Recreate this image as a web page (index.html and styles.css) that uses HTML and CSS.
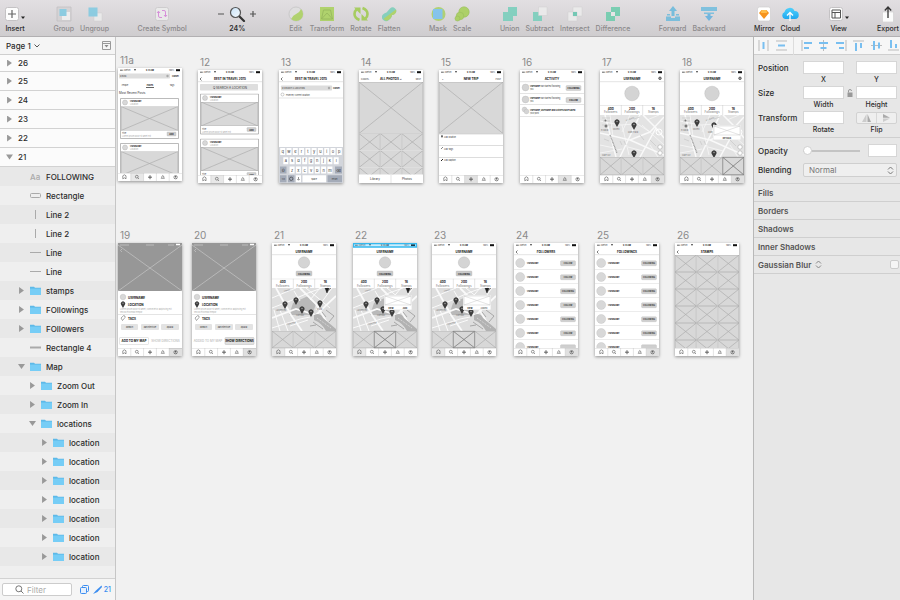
FILE: index.html
```html
<!DOCTYPE html>
<html lang="en">
<head>
<meta charset="utf-8">
<title>Wireframes</title>
<link rel="stylesheet" href="styles.css">
</head>
<body>
<svg class="defs" aria-hidden="true">
  <defs>
    <linearGradient id="lens" x1="0" y1="0" x2="1" y2="1"><stop offset="0" stop-color="#c9e2f7"/><stop offset="1" stop-color="#f4fafe"/></linearGradient>
    <linearGradient id="sky" x1="0" y1="0" x2="0" y2="1"><stop offset="0" stop-color="#4fd0fb"/><stop offset="1" stop-color="#1fa8f0"/></linearGradient>
  </defs>
  <symbol id="folder" viewBox="0 0 11 9"><path d="M0 .8h4l1 1h6V9H0z" fill="#5db9e8"/><path d="M0 2.6h11V9H0z" fill="#76cdf6"/></symbol>
  <symbol id="box" viewBox="0 0 10 10" preserveAspectRatio="none"><path class="hair" d="M0 0h10v10H0zM0 0l10 10M10 0L0 10"/></symbol>
  <symbol id="status" viewBox="0 0 64 4">
    <path d="M2 2.2h.8M3.2 2.2H4M4.4 2.2h.8" stroke="#222" stroke-width=".9"/><text x="6" y="3">Sketch</text>
    <path d="M16 1.4q1-.8 2 0l-1 1.4z" fill="#222"/>
    <text class="b" x="32" y="3" text-anchor="middle">9:41 AM</text><text x="51" y="3">100%</text>
    <path d="M58 1.2h4v2h-4z" fill="#111"/>
  </symbol>
  <symbol id="glyphs" viewBox="0 0 64 8">
    <path class="line" d="M0 .3h64M12.8 0v8M25.6 0v8M38.4 0v8M51.2 0v8"/>
    <g fill="none" stroke="#555" stroke-width=".6"><path d="M4.8 5.8v-3l1.6-1 1.6 1v3l-1.6-1z"/><circle cx="18.8" cy="3.7" r="1.4"/><path d="M19.8 4.8l1.2 1.2"/><path d="M32 2.2v4M30 4.2h4" stroke-width=".9"/><path d="M43.200 5.300h3.200q-.8-.8-.8-2.200-.8-1.200-1.600 0 0 1.400-.8 2.200z"/><circle cx="57.600" cy="4.200" r="1.700"/><path d="M56.600 5.400q1-1.400 2 0"/></g><circle cx="57.600" cy="3.600" r=".7" fill="#555"/>
  </symbol>
  <symbol id="pin" viewBox="0 0 6 8"><path d="M3 8L.9 4.300A2.500 2.500 0 1 1 5.100 4.300z" fill="#3d3d3d"/><circle cx="3" cy="2.500" r=".8" fill="#999"/></symbol>
  <symbol id="card" viewBox="0 0 60 42">
    <path d="M.5.5h58v40H.5z" fill="#fff" stroke="#aaa" stroke-width=".8"/><circle cx="5" cy="4.500" r="2.500" fill="#d8d8d8" stroke="#999" stroke-width=".3"/>
    <text class="b" x="10" y="4">USERNAME</text><text class="pale" x="10" y="7">Location</text>
    <use href="#box" x="1" y="8.500" width="57" height="24"/><text x="2" y="36">Title</text>
    <text class="pale" x="2" y="39">Lorem ipsum dolor sit amet elit</text>
    <rect x="47" y="34" width="9" height="4" rx=".7" fill="#cfcfcf" stroke="#aaa" stroke-width=".3"/><text class="b" x="51.500" y="37" text-anchor="middle">ADD</text>
  </symbol>
  <symbol id="stats" viewBox="0 0 64 10">
    <path class="line" d="M0 .3h64M21.300 0v10M42.700 0v10"/>
    <g text-anchor="middle"><text class="b m" x="10.700" y="4.800">400</text><text class="b m" x="32" y="4.800">200</text><text class="b m" x="53.300" y="4.800">16</text>
    <text class="gray m" x="10.700" y="8">Followers</text><text class="gray m" x="32" y="8">Followings</text><text class="gray m" x="53.300" y="8">Stamps</text></g>
  </symbol>
  <symbol id="map-a" viewBox="0 0 64 42">
    <path d="M0 0h64v42H0z" fill="#e3e3e3"/>
    <g fill="none" stroke="#f9f9f9"><path stroke-width="1.500" d="M5 0l11 42M20 42L40 0M0 18l30 7 20-8L64 2M43 0l13 13 8 10M30 25l34 15M56 13L40 42"/><path stroke-width=".7" d="M0 6l20 4 16-1M0 30l14 3M22 10l7 30M42 10l22 20M50 30l8 12M10 0l3 22M30 0l-8 17M0 38l22-4M36 8l14 9M47 5l12-5M28 32l15 4"/></g>
    <g stroke="#c7c7c7" fill="none" stroke-width=".7"><path d="M2 3h8M3 6h7M2 10h9M20 26l2 4M24 26l2 4M40 20l4 5M34 4l6-2M4 24l5 2M50 25l6 6"/></g>
    <path d="M10 20l7 18" stroke="#999" stroke-width="1.200" stroke-dasharray="1 .5"/><circle cx="59" cy="17" r="3" fill="none" stroke="#fff"/>
    <g fill="#777"><circle cx="5.500" cy="5.500" r="1"/><circle cx="6" cy="11" r="1.500"/></g>
    <text class="gray" x="1" y="16">El Raval</text><text class="gray" x="28" y="18">Gran Plaza</text><text class="gray" x="13" y="15">Museo</text><text class="gray" x="2" y="41">Calle Sur</text><text class="gray" x="26" y="6" transform="rotate(-18 26 6)">Av. Norte</text>
    <circle cx="60" cy="32" r="2.200" fill="#fff" stroke="#888" stroke-width=".4"/><circle cx="60" cy="38" r="2.200" fill="#fff" stroke="#888" stroke-width=".4"/>
    <use href="#pin" x="14" y="4" width="6" height="8"/><use href="#pin" x="31" y="7" width="6" height="8"/><use href="#pin" x="31" y="35" width="6" height="8"/>
  </symbol>
  <symbol id="map-b" viewBox="0 0 64 43">
    <path d="M0 0h64v43H0z" fill="#dedede"/><path d="M17 27l4-12 15-7 8 8-4 11z" fill="#b9b9b9"/>
    <g fill="none" stroke="#fafafa"><path stroke-width="1.800" d="M0 30l24-9 20 6L64 8M4 0l15 27L30 43M28 0l16 16 16 27"/><path stroke-width="1" d="M0 10l14-6 10-4M0 20l18-7 18-8L50 0M8 43L2 22M0 40l28-9 10-2M16 43L8 22M34 0l24 20M48 0L38 12M22 3l6 10M60 0L44 22M18 38l18-6"/></g>
    <path d="M42 27q6-3 9 3l13 11v2H54q-4-8-12-11z" fill="#b2b2b2"/><path d="M54 22l8 6-5 6M50 24l4 5M41 34l10 7M38 38l6-1" fill="none" stroke="#999" stroke-width=".8"/>
    <path d="M45 30l14 10" stroke="#eee" stroke-width=".7" stroke-dasharray="1 1"/>
    <text class="gray" x="4" y="23">La Merced</text><text class="gray" x="24" y="28">Catedral</text><text class="gray" x="15" y="37" transform="rotate(-14 15 37)">Calle Real</text><text class="gray" x="12" y="4" transform="rotate(-15 12 4)">Centro</text><text class="gray" x="45" y="22">Plaza</text>
    <use href="#pin" x="10" y="13" width="6" height="8"/><use href="#pin" x="21" y="9" width="6" height="8"/><use href="#pin" x="27" y="18" width="6" height="8"/><use href="#pin" x="36" y="21" width="6" height="8"/><use href="#pin" x="45" y="12" width="6" height="8"/><path d="M53 0h4l-2 5zM54 4l5-4" fill="#222" stroke="#222" stroke-width=".5"/>
  </symbol>
  <symbol id="photo-detail" viewBox="0 0 64 113">
    <path d="M0 0h64v48H0z" fill="#979797"/><path d="M0 2l64 46M64 2L0 48" stroke="#cfcfcf" stroke-width=".6"/>
    <path d="M2 2h9M28 2h8M50 2h6" stroke="#ccc" stroke-width=".7"/><path d="M58 1.500h4" stroke="#fff" stroke-width="1.500"/><path d="M4 6L2.500 7.500 4 9" fill="none" stroke="#ddd" stroke-width=".5"/>
    <circle cx="5" cy="54" r="2.800" fill="#d8d8d8" stroke="#aaa" stroke-width=".3"/><text class="m b" x="10" y="55.500">USERNAME</text>
    <use href="#pin" x="2" y="58" width="6" height="7"/><text class="m b" x="10" y="62.500">LOCATION</text>
    <text class="pale" x="2" y="67">Lorem ipsum dolor sit amet, consectetur adipiscing elit</text><text class="pale" x="2" y="69.500">sed do eiusmod tempor</text>
    <path class="line" d="M0 71.500h64"/><path d="M3 75l2.500-2.300 1.500.3v1.500L4.500 77.500z" fill="none" stroke="#555" stroke-width=".5"/><text class="m b" x="10" y="77">TAGS</text>
    <g fill="#e3e3e3"><rect x="3" y="81" width="17" height="6" rx="1"/><rect x="23" y="81" width="18" height="6" rx="1"/><rect x="43" y="81" width="18" height="6" rx="1"/></g>
    <g text-anchor="middle"><text x="11.500" y="85">#beach</text><text x="32" y="85">#architecture</text><text x="52" y="85">#plaza</text></g>
    <use href="#glyphs" y="105" width="64" height="8"/>
  </symbol>
  <symbol id="profile" viewBox="0 0 64 113">
    <path d="M0 0h64v113H0z" fill="#fff"/><use href="#status" width="64" height="4"/><text class="m b" x="32" y="9.500" text-anchor="middle">USERNAME</text><path class="line" d="M0 11.700h64"/>
    <circle cx="32" cy="19.500" r="5.700" fill="#d4d4d4" stroke="#aaa" stroke-width=".3"/><rect x="24" y="28" width="16" height="5" rx="1" fill="#cbcbcb" stroke="#aaa" stroke-width=".3"/><text class="b" x="32" y="31.500" text-anchor="middle">FOLLOWING</text>
    <use href="#stats" y="35.500" width="64" height="10"/><use href="#map-b" y="45" width="64" height="43"/>
    <use href="#box" y="88" width="21.300" height="17"/><use href="#box" x="21.300" y="88" width="21.300" height="17"/><use href="#box" x="42.700" y="88" width="21.300" height="17"/>
    <path d="M0 105h12.800v8H0z" fill="#e8e8e8"/><use href="#glyphs" y="105" width="64" height="8"/>
  </symbol>
  <symbol id="profile-a" viewBox="0 0 64 113">
    <use href="#status" width="64" height="4"/><text class="m b" x="32" y="9.500" text-anchor="middle">USERNAME</text><circle cx="60" cy="8.300" r="1.300" fill="#999" stroke="#333" stroke-width=".6"/><path class="line" d="M0 11.700h64"/>
    <circle cx="32" cy="23.500" r="7.300" fill="#d4d4d4" stroke="#aaa" stroke-width=".3"/><use href="#stats" y="35" width="64" height="10"/><use href="#map-a" y="45" width="64" height="42"/>
    <use href="#box" y="87" width="21.300" height="18"/><use href="#box" x="21.300" y="87" width="21.300" height="18"/><use href="#box" x="42.700" y="87" width="21.300" height="18"/>
    <path d="M51.200 105H64v8H51.200z" fill="#e0e0e0"/><use href="#glyphs" y="105" width="64" height="8"/>
  </symbol>
  <symbol id="popup" viewBox="0 0 28 15"><path d="M0 0h28v15H0z" fill="#fff" stroke="#ccc" stroke-width=".5"/><path d="M1 1h26v9H1zM1 1l26 9M27 1L1 10" fill="none" stroke="#bbb" stroke-width=".4"/></symbol>
  <symbol id="person" viewBox="0 0 64 14"><circle cx="6.200" cy="7" r="4.500" fill="#d8d8d8" stroke="#b5b5b5" stroke-width=".3"/><text class="b" x="13" y="8">USERNAME</text><rect x="46.500" y="4.700" width="15" height="5" rx="1" fill="#cfcfcf" stroke="#b0b0b0" stroke-width=".3"/><path class="line" d="M0 13.800h64"/></symbol>
  <symbol id="trio" viewBox="0 0 64 17"><use href="#box" width="21.300" height="17"/><use href="#box" x="21.300" width="21.300" height="17"/><use href="#box" x="42.700" width="21.300" height="17"/></symbol>
</svg>

<div class="app">
<header class="toolbar">
  <div class="group"><button class="tool"><svg class="wide" viewBox="0 0 20 16"><rect x=".5" y="1.500" width="13" height="13" rx="2" fill="#fdfdfd" stroke="#c4c2c4"/><path d="M7 4v8M3 8h8" stroke="#666" stroke-width="1.200"/><path d="M16 10.500h4l-2 2.500z" fill="#222"/></svg>Insert</button></div>
  <div class="group dim">
    <button class="tool"><svg viewBox="0 0 16 16"><path d="M1 1h14v14H1z" fill="#d4d2d4" stroke="#bcbabc" stroke-width=".8"/><path d="M6 6h8v8H6z" fill="#f2f2f2"/><path d="M3.500 3h7v7h-7z" fill="#79c9e2"/></svg>Group</button>
    <button class="tool"><svg viewBox="0 0 16 16"><path d="M7 7h8v8H7z" fill="#eee" stroke="#ccc" stroke-width=".5"/><path d="M1.500 1.500h9v9h-9z" fill="#79c9e2"/></svg>Ungroup</button>
  </div>
  <div class="group dim"><button class="tool"><svg viewBox="0 0 16 16"><rect x="1.500" y="1.500" width="13" height="13" rx="2" fill="#eee" stroke="#cbc9cb"/><path d="M8 11.500H6q-1.500 0-1.500-1.500V5.500M3 7l1.500-1.800L6 7M8 4.500h2q1.500 0 1.500 1.500v4.500M10 9l1.500 1.800L13 9" fill="none" stroke="#d67fd9"/></svg>Create Symbol</button></div>
  <div class="group zoomer"><button class="tool"><svg class="zoom" viewBox="0 0 38 16"><path d="M0 8h6M32 8h6M35 5v6" stroke="#555" stroke-width="1.200"/><path d="M21.500 10.500l4.500 4.500" stroke="#333" stroke-width="2.200" stroke-linecap="round"/><circle cx="17.500" cy="6.500" r="5" fill="url(#lens)" stroke="#555" stroke-width="1.200"/></svg>24%</button></div>
  <div class="group dim">
    <button class="tool"><svg viewBox="0 0 16 16"><circle cx="8" cy="8" r="7" fill="#e0e0e0" stroke="#bbb" stroke-width=".7"/><path d="M13 3.100A7 7 0 1 1 3.100 13q2-4 5-5 4-2 4.900-4.900z" fill="#a7d155"/></svg>Edit</button>
    <button class="tool"><svg viewBox="0 0 16 16"><path d="M1 1h14v14H1z" fill="#a5d152"/><path d="M4.500 4h7l2 9h-11zM2.500 13l5.500-6 5.500 6" fill="none" stroke="#84ad3c" stroke-width=".8"/></svg>Transform</button>
    <button class="tool"><svg class="round" viewBox="0 0 18 16"><path d="M7.500 14Q2.500 12 2.500 8q0-3 2-4.500M10.500 2q5 2 5 6 0 3-2 4.500" fill="none" stroke="#9aca43" stroke-width="2.600"/><path d="M2 1.500h6.500V8zM16 14.500H9.500V8z" fill="#9aca43"/></svg>Rotate</button>
    <button class="tool"><svg viewBox="0 0 16 16"><path d="M9 2.500a3.600 3.600 0 0 1 5.100 5.100q-1 1.300-3 1.400-.2 2-1.400 3.200l-1.800 1.700A4 4 0 0 1 2 8.500q1.500-1.600 3.500-2z" fill="#72cdb6"/><path d="M15 3.500q.8 2.500-1 4.200-1 1.200-3 1.400-.2 2-1.400 3.200-4 4.500-7 .5z" fill="#a5d152"/></svg>Flatten</button>
  </div>
  <div class="group dim">
    <button class="tool"><svg viewBox="0 0 16 16"><circle cx="8.500" cy="8" r="7" fill="#a5cf5c"/><path d="M3 3h9.500v10H3z" fill="#70bff0"/></svg>Mask</button>
    <button class="tool"><svg viewBox="0 0 16 16"><g fill="#a2cf4d" stroke="#8ab83c" stroke-width=".6"><circle cx="10" cy="6" r="5.200"/><circle cx="6" cy="10" r="3.800"/><circle cx="3.500" cy="12.500" r="2.500"/></g></svg>Scale</button>
  </div>
  <div class="group dim">
    <button class="tool"><svg viewBox="0 0 16 16"><path d="M6 1h9v9h-4v5H1V6h5z" fill="#6fceb9"/></svg>Union</button>
    <button class="tool"><svg viewBox="0 0 16 16"><path d="M1 6h9v9H1z" fill="#6fceb9"/><path d="M6.500 1H15v8.500H6.500z" fill="#eee" stroke="#ccc" stroke-width=".5"/></svg>Subtract</button>
    <button class="tool"><svg viewBox="0 0 16 16"><path d="M1 6h9v9H1zM6 1h9v9H6z" fill="#eee" stroke="#ccc" stroke-width=".5"/><path d="M6 6h4v4H6z" fill="#5bc4ab"/></svg>Intersect</button>
    <button class="tool"><svg viewBox="0 0 16 16"><path d="M6 1h9v9h-5v5H1V6h5z" fill="#63cba8"/><path d="M6 6h4v4H6z" fill="#e9e9e9"/></svg>Difference</button>
  </div>
  <div class="group dim">
    <button class="tool"><svg viewBox="0 0 16 16"><path d="M8 0l4 5H9.500v5h-3V5H4z" fill="#5fb7dc"/><path d="M1 10.500h5v1.500h4v-1.500h5V15H1zM2 8h3v1.500H2zM11 8h3v1.500h-3z" fill="#66b9dc"/></svg>Forward</button>
    <button class="tool"><svg viewBox="0 0 16 16"><path d="M0 1h16v4H0zM3 6.500h10V8H3z" fill="#69bbdf"/><path d="M6.500 8h3v2H12l-4 5-4-5h2.500z" fill="#59aee0"/></svg>Backward</button>
  </div>
  <div class="group">
    <button class="tool"><svg viewBox="0 0 16 16"><rect x="1.500" y="1" width="13" height="14" rx="2" fill="#fff" stroke="#d0ced0" stroke-width=".7"/><path d="M5.500 4h5L13 7l-5 6-5-6z" fill="#f7941d"/><path d="M5.500 4h5L11 7H5z" fill="#ffbd4a"/></svg>Mirror</button>
    <button class="tool"><svg class="round" viewBox="0 0 18 16"><path d="M4 13a3.700 3.700 0 0 1-.5-7A5.300 5.300 0 0 1 13.500 5 4 4 0 0 1 14 13z" fill="url(#sky)"/><path d="M9 15V7M6 9.500l3-3 3 3" fill="none" stroke="#fff" stroke-width="1.300"/></svg>Cloud</button>
  </div>
  <div class="group"><button class="tool"><svg class="wide" viewBox="0 0 20 16"><rect x=".5" y="1.500" width="13" height="13" rx="2" fill="#fdfdfd" stroke="#c4c2c4"/><path d="M3 4h8.500v8H3zM3 6.500h8.500M6 6.500V12" fill="none" stroke="#555"/><path d="M16 10.500h4l-2 2.500z" fill="#222"/></svg>View</button></div>
  <div class="group"><button class="tool"><svg viewBox="0 0 16 16"><path d="M2.500 6h11v10h-11z" fill="#fbfbfb" stroke="#ccc" stroke-width=".6"/><path d="M8 12V1M4.800 4.500L8 1l3.200 3.500" fill="none" stroke="#333" stroke-width="1.300"/></svg>Export</button></div>
</header>

<aside class="layers">
  <div class="page-bar"><button class="page">Page 1 <svg viewBox="0 0 6 4"><path d="M.5.5L3 3 5.500.5" fill="none" stroke="#555"/></svg></button><button class="panel-toggle" aria-label="Toggle pages"><svg viewBox="0 0 9 9"><path d="M.5.500h8v8h-8zM.5 2.500h8" fill="none" stroke="#999"/><path d="M2.500 4h4l-2 2.500z" fill="#888"/></svg></button></div>
  <ul class="boards">
    <li><button><i class="tri"></i>26</button></li><li><button><i class="tri"></i>25</button></li><li><button><i class="tri"></i>24</button></li><li><button><i class="tri"></i>23</button></li><li><button><i class="tri"></i>22</button></li><li><button><i class="tri open"></i>21</button></li>
  </ul>
  <ul class="tree">
    <li><button><i></i><span class="aa">Aa</span>FOLLOWING</button></li>
    <li><button><i></i><svg viewBox="0 0 11 9"><rect x=".5" y="2.500" width="10" height="4" rx="1" fill="#eee" stroke="#aaa"/></svg>Rectangle</button></li>
    <li><button><i></i><svg viewBox="0 0 11 9"><path d="M5.500 0v9" stroke="#aaa"/></svg>Line 2</button></li>
    <li><button><i></i><svg viewBox="0 0 11 9"><path d="M5.500 0v9" stroke="#aaa"/></svg>Line 2</button></li>
    <li><button><i></i><svg viewBox="0 0 11 9"><path d="M0 4.500h11" stroke="#aaa"/></svg>Line</button></li>
    <li><button><i></i><svg viewBox="0 0 11 9"><path d="M0 4.500h11" stroke="#aaa"/></svg>Line</button></li>
    <li><button><i class="tri"></i><svg><use href="#folder"/></svg>stamps</button></li>
    <li><button><i class="tri"></i><svg><use href="#folder"/></svg>FOllowings</button></li>
    <li><button><i class="tri"></i><svg><use href="#folder"/></svg>FOllowers</button></li>
    <li><button><i></i><svg viewBox="0 0 11 9"><path d="M0 4.500h11" stroke="#aaa" stroke-width="2"/></svg>Rectangle 4</button></li>
    <li><button><i class="tri open"></i><svg><use href="#folder"/></svg>Map</button></li>
    <li class="l2"><button><i class="tri"></i><svg><use href="#folder"/></svg>Zoom Out</button></li>
    <li class="l2"><button><i class="tri"></i><svg><use href="#folder"/></svg>Zoom In</button></li>
    <li class="l2"><button><i class="tri open"></i><svg><use href="#folder"/></svg>locations</button></li>
    <li class="l3"><button><i class="tri"></i><svg><use href="#folder"/></svg>location</button></li>
    <li class="l3"><button><i class="tri"></i><svg><use href="#folder"/></svg>location</button></li>
    <li class="l3"><button><i class="tri"></i><svg><use href="#folder"/></svg>location</button></li>
    <li class="l3"><button><i class="tri"></i><svg><use href="#folder"/></svg>location</button></li>
    <li class="l3"><button><i class="tri"></i><svg><use href="#folder"/></svg>location</button></li>
    <li class="l3"><button><i class="tri"></i><svg><use href="#folder"/></svg>location</button></li>
    <li class="l3"><button><i class="tri"></i><svg><use href="#folder"/></svg>location</button></li>
  </ul>
  <div class="filter">
    <label class="search"><svg viewBox="0 0 9 9"><circle cx="3.800" cy="3.800" r="3" fill="none" stroke="#777"/><path d="M6 6l2.500 2.500" stroke="#777"/></svg><input type="search" placeholder="Filter" aria-label="Filter layers"></label>
    <button aria-label="Show artboards"><svg viewBox="0 0 9 9"><rect x="2.500" y=".5" width="6" height="6" rx="1" fill="none" stroke="#3b8df0"/><rect x=".5" y="2.500" width="6" height="6" rx="1" fill="#e6f0fd" stroke="#3b8df0"/></svg></button>
    <button><svg viewBox="0 0 9 9"><path d="M8.500.5L9 2 4.500 7 0 9l3-3.500z" fill="#3b8df0"/></svg>21</button>
  </div>
</aside>

<main class="canvas">
  <figure class="board c1 r0"><figcaption>11a</figcaption>
    <svg viewBox="0 0 64 113"><use href="#status" width="64" height="4"/><rect x="1" y="5.500" width="51" height="5" rx=".7" fill="#dedede"/><text x="2" y="9">Q BCN</text><circle cx="49.500" cy="8" r="1.200" fill="#aaa"/><text class="b" x="54" y="9">Cancel</text>
      <text x="7" y="18" text-anchor="middle">People</text><text class="b" x="32" y="18" text-anchor="middle">Places</text><text x="54" y="18" text-anchor="middle">Tags</text><path d="M28 19.500h8" stroke="#222" stroke-width=".7"/>
      <text class="m" x="1" y="26">Most Recent Posts</text><use href="#card" x="2" y="30" width="60" height="42"/><use href="#card" x="2" y="75" width="60" height="42"/>
      <path d="M0 105h64v8H0z" fill="#fff"/><path d="M12.800 105h12.800v8H12.800z" fill="#e8e8e8"/><use href="#glyphs" y="105" width="64" height="8"/></svg></figure>
  <figure class="board c2 r1"><figcaption>12</figcaption>
    <svg viewBox="0 0 64 113"><use href="#status" width="64" height="4"/><path class="back" d="M3.500 7.500L2 9l1.500 1.500"/><text class="m b" x="32" y="9.500" text-anchor="middle">BEST IN TRAVEL 2015</text><path class="line" d="M0 11.700h64"/><rect x="2" y="14" width="58" height="6.500" rx=".7" fill="#dedede"/><text class="m" x="32" y="18.500" text-anchor="middle">Q SEARCH A LOCATION</text>
      <use href="#card" x="2" y="23.500" width="60" height="42"/><use href="#card" x="2" y="68.500" width="60" height="42"/>
      <path d="M0 105h64v8H0z" fill="#fff"/><path d="M12.800 105h12.800v8H12.800z" fill="#e8e8e8"/><use href="#glyphs" y="105" width="64" height="8"/></svg></figure>
  <figure class="board c3 r1"><figcaption>13</figcaption>
    <svg viewBox="0 0 64 113"><use href="#status" width="64" height="4"/><path class="back" d="M3.500 7.500L2 9l1.500 1.500"/><text class="m b" x="32" y="9.500" text-anchor="middle">BEST IN TRAVEL 2015</text><path class="line" d="M0 11.700h64"/><rect x="2" y="15.500" width="51" height="5" rx=".7" fill="#dcdcdc"/><text x="3" y="19">Q SEARCH A LOCATION</text><circle cx="50" cy="18" r="1.200" fill="#aaa"/><text class="b" x="54" y="19">Cancel</text>
      <circle cx="3.500" cy="24.500" r="1.500" fill="none" stroke="#888" stroke-width=".4"/><text x="7" y="25.500">From my current location</text><path class="line" d="M0 28h64"/>
      <path d="M0 77h64v36H0z" fill="#d2d5db"/>
      <g class="keys"><path d="M3.700 78v7M10 78v7M16.300 78v7M22.600 78v7M28.900 78v7M35.100 78v7M41.400 78v7M47.700 78v7M54 78v7M60.300 78v7M6.800 87.300v7M13.100 87.300v7M19.400 87.300v7M25.700 87.300v7M32 87.300v7M38.300 87.300v7M44.600 87.300v7M50.900 87.300v7M57.200 87.300v7M13.100 96.500v7M19.400 96.500v7M25.700 96.500v7M32 96.500v7M38.300 96.500v7M44.600 96.500v7M50.900 96.500v7"/></g>
      <path d="M1 96.500h6.500v7H1zM56 96.500h7v7h-7zM1 105.300h6.500v7H1zM9 105.300h6.500v7H9zM48.500 105.300H63v7H48.500z" fill="#a4abb8"/><path d="M17 105.300h5v7h-5zM23.500 105.300h23.500v7H23.500z" fill="#fff"/>
      <g class="m" text-anchor="middle"><text x="3.700" y="83">q</text><text x="10" y="83">w</text><text x="16.300" y="83">e</text><text x="22.600" y="83">r</text><text x="28.900" y="83">t</text><text x="35.100" y="83">y</text><text x="41.400" y="83">u</text><text x="47.700" y="83">i</text><text x="54" y="83">o</text><text x="60.300" y="83">p</text><text x="6.800" y="92">a</text><text x="13.100" y="92">s</text><text x="19.400" y="92">d</text><text x="25.700" y="92">f</text><text x="32" y="92">g</text><text x="38.300" y="92">h</text><text x="44.600" y="92">j</text><text x="50.900" y="92">k</text><text x="57.200" y="92">l</text><text x="4.300" y="101.500">⇧</text><text x="13.100" y="101.500">z</text><text x="19.400" y="101.500">x</text><text x="25.700" y="101.500">c</text><text x="32" y="101.500">v</text><text x="38.300" y="101.500">b</text><text x="44.600" y="101.500">n</text><text x="50.900" y="101.500">m</text><text x="59.500" y="101.500">⌫</text></g>
      <g text-anchor="middle"><text x="4.300" y="110">123</text><text x="35" y="110">space</text><text x="55.700" y="110">return</text></g><g fill="none" stroke="#222" stroke-width=".5"><circle cx="12.200" cy="108.800" r="1.700"/><path d="M19.500 107v2.500M18.300 109q1.200 2.500 2.400 0"/></g></svg></figure>
  <figure class="board c4 r1"><figcaption>14</figcaption>
    <svg viewBox="0 0 64 113"><use href="#status" width="64" height="4"/><text x="2" y="9.500">CANCEL</text><text class="m b" x="32" y="9.500" text-anchor="middle">ALL PHOTOS ⌄</text><text x="62" y="9.500" text-anchor="end">NEXT</text>
      <use href="#box" y="12" width="64" height="51.500"/><use href="#trio" y="63.500" width="64" height="17"/><use href="#trio" y="80.500" width="64" height="17"/><use href="#trio" y="97.500" width="64" height="17"/>
      <path d="M0 104.500h64v9H0z" fill="#fff"/><path class="line" d="M32 104.500v9"/><text class="m" x="16" y="110" text-anchor="middle">Library</text><text class="m" x="48" y="110" text-anchor="middle">Photos</text></svg></figure>
  <figure class="board c5 r1"><figcaption>15</figcaption>
    <svg viewBox="0 0 64 113"><use href="#status" width="64" height="4"/><text x="3" y="9.500">×</text><text class="m b" x="32" y="9.500" text-anchor="middle">NEW TRIP</text><text x="62" y="9.500" text-anchor="end">POST</text><use href="#box" y="12" width="64" height="51.500"/>
      <path d="M0 64h64M0 75.500h64M0 87.500h64" stroke="#bbb" stroke-width=".5"/><use href="#pin" x="1.500" y="65" width="3" height="3"/><text x="5" y="67.500">Add location</text><path d="M2 79l2-2" stroke="#555" stroke-width=".7"/><text x="5" y="79.500">Add Tags</text><path d="M2 91l2-2" stroke="#222"/><text x="5" y="91">Add Caption</text>
      <path d="M25.600 105h12.800v8H25.600z" fill="#e0e0e0"/><use href="#glyphs" y="105" width="64" height="8"/></svg></figure>
  <figure class="board c6 r1"><figcaption>16</figcaption>
    <svg viewBox="0 0 64 113"><use href="#status" width="64" height="4"/><text class="m b" x="32" y="9.500" text-anchor="middle">ACTIVITY</text><path class="line" d="M0 11.700h64M0 23.500h64M0 34.500h64M0 46.500h64"/>
      <g fill="#d4d4d4" stroke="#aaa" stroke-width=".3"><circle cx="5.500" cy="17.500" r="3.400"/><circle cx="5.500" cy="29.500" r="3.400"/><circle cx="4.500" cy="39.500" r="2.400"/><circle cx="6.500" cy="41.500" r="2.400"/><rect x="46" y="15.500" width="15" height="5" rx="1"/><rect x="46" y="27.500" width="15" height="5" rx="1"/></g>
      <text x="10" y="17"><tspan class="b">Username</tspan> has started following</text><text x="10" y="20">you</text><text x="10" y="29"><tspan class="b">Username</tspan> has started following</text><text x="10" y="32">you</text><text class="b" x="10" y="41">Username, username and 6 others have saved</text><text x="10" y="44">your post</text><text class="b" x="53.500" y="19" text-anchor="middle">FOLLOWING</text><text class="b" x="53.500" y="31" text-anchor="middle">FOLLOW</text>
      <path d="M38.400 105h12.800v8H38.400z" fill="#e4e4e4"/><use href="#glyphs" y="105" width="64" height="8"/></svg></figure>
  <figure class="board c7 r1"><figcaption>17</figcaption><svg viewBox="0 0 64 113"><use href="#profile-a"/></svg></figure>
  <figure class="board c8 r1"><figcaption>18</figcaption><svg viewBox="0 0 64 113"><use href="#profile-a"/><use href="#popup" x="33" y="55" width="28" height="15"/><text class="b" x="47" y="68.500" text-anchor="middle">DETAILS</text><path class="dark" d="M42.700 87.300h21v17.500h-21zl21 17.500M63.700 87.300l-21 17.500"/></svg></figure>

  <figure class="board c1 r2"><figcaption>19</figcaption><svg viewBox="0 0 64 113"><use href="#photo-detail"/><rect x="1.500" y="94.500" width="29" height="7" rx=".7" fill="#fff" stroke="#ccc" stroke-width=".5"/><text class="b m" x="16" y="99" text-anchor="middle">ADD TO MY MAP</text><text class="pale m" x="47.500" y="99" text-anchor="middle">SHOW DIRECTIONS</text><path d="M51.200 105H64v8H51.200z" fill="#000" opacity=".12"/></svg></figure>
  <figure class="board d2 r2"><figcaption>20</figcaption><svg viewBox="0 0 64 113"><use href="#photo-detail"/><rect x="33" y="94.500" width="29" height="7" rx=".7" fill="#e0e0e0" stroke="#bbb" stroke-width=".5"/><text class="pale m" x="16" y="99" text-anchor="middle">ADDED TO MY MAP</text><text class="b m" x="47.500" y="99" text-anchor="middle">SHOW DIRECTIONS</text><path d="M51.200 105H64v8H51.200z" fill="#000" opacity=".12"/></svg></figure>
  <figure class="board d3 r2"><figcaption>21</figcaption><svg viewBox="0 0 64 113"><use href="#profile"/></svg></figure>
  <figure class="board d4 r2"><figcaption>22</figcaption><svg viewBox="0 0 64 113"><use href="#profile"/><use href="#popup" x="31" y="52" width="28" height="15"/><text class="b" x="38" y="65.500" text-anchor="middle">VIEW</text><text class="b" x="52" y="65.500" text-anchor="middle">ADD</text><path class="dark" d="M21.300 88.300h21.300v16.500H21.300zl21.300 16.500M42.600 88.300l-21.300 16.500"/><path d="M.5.500h63v3.500H.5z" fill="#35b8ee" fill-opacity=".25" stroke="#35b8ee" stroke-width="1.500"/></svg></figure>
  <figure class="board d5 r2"><figcaption>23</figcaption><svg viewBox="0 0 64 113"><use href="#profile"/><use href="#popup" x="31" y="52" width="28" height="15"/><text class="b" x="38" y="65.500" text-anchor="middle">VIEW</text><text x="52" y="65.500" text-anchor="middle">ADDED</text><path class="dark" d="M21.300 88.300h21.300v16.500H21.300zl21.300 16.500M42.600 88.300l-21.300 16.500"/></svg></figure>
  <figure class="board d6 r2"><figcaption>24</figcaption>
    <svg viewBox="0 0 64 113"><use href="#status" width="64" height="4"/><path class="back" d="M3.500 7.500L2 9l1.500 1.500"/><text class="m b" x="32" y="9.500" text-anchor="middle">FOLLOWERS</text><path class="line" d="M0 11.700h64"/>
      <use href="#person" y="13" width="64" height="14"/><use href="#person" y="27" width="64" height="14"/><use href="#person" y="41" width="64" height="14"/><use href="#person" y="55" width="64" height="14"/><use href="#person" y="69" width="64" height="14"/><use href="#person" y="83" width="64" height="14"/><use href="#person" y="97" width="64" height="14"/>
      <g class="b" text-anchor="middle"><text x="54" y="21.200">FOLLOW</text><text x="54" y="35.200">FOLLOW</text><text x="54" y="49.200">FOLLOWING</text><text x="54" y="63.200">FOLLOW</text><text x="54" y="77.200">FOLLOWING</text><text x="54" y="91.200">FOLLOW</text></g>
      <path d="M0 105h64v8H0z" fill="#fff"/><path d="M51.200 105H64v8H51.200z" fill="#e0e0e0"/><use href="#glyphs" y="105" width="64" height="8"/></svg></figure>
  <figure class="board d7 r2"><figcaption>25</figcaption>
    <svg viewBox="0 0 64 113"><use href="#status" width="64" height="4"/><path class="back" d="M3.500 7.500L2 9l1.500 1.500"/><text class="m b" x="32" y="9.500" text-anchor="middle">FOLLOWINGS</text><path class="line" d="M0 11.700h64"/>
      <use href="#person" y="13" width="64" height="14"/><use href="#person" y="27" width="64" height="14"/><use href="#person" y="41" width="64" height="14"/><use href="#person" y="55" width="64" height="14"/><use href="#person" y="69" width="64" height="14"/><use href="#person" y="83" width="64" height="14"/><use href="#person" y="97" width="64" height="14"/>
      <g class="b" text-anchor="middle"><text x="54" y="21.200">FOLLOWING</text><text x="54" y="35.200">FOLLOWING</text><text x="54" y="49.200">FOLLOWING</text><text x="54" y="63.200">FOLLOWING</text><text x="54" y="77.200">FOLLOWING</text><text x="54" y="91.200">FOLLOWING</text></g>
      <path d="M0 105h64v8H0z" fill="#fff"/><path d="M51.200 105H64v8H51.200z" fill="#e0e0e0"/><use href="#glyphs" y="105" width="64" height="8"/></svg></figure>
  <figure class="board d8 r2"><figcaption>26</figcaption>
    <svg viewBox="0 0 64 113"><use href="#status" width="64" height="4"/><path class="back" d="M3.500 7.500L2 9l1.500 1.500"/><text class="m b" x="32" y="9.500" text-anchor="middle">STAMPS</text>
      <use href="#trio" y="12" width="64" height="17"/><use href="#trio" y="29" width="64" height="17"/><use href="#trio" y="46" width="64" height="17"/><use href="#trio" y="63" width="64" height="17"/><use href="#trio" y="80" width="64" height="17"/><use href="#trio" y="97" width="64" height="17"/>
      <path d="M0 105h64v8H0z" fill="#fff"/><path d="M51.200 105H64v8H51.200z" fill="#e0e0e0"/><use href="#glyphs" y="105" width="64" height="8"/></svg></figure>
</main>

<aside class="inspector">
  <div class="align">
    <button aria-label="Distribute horizontally"><svg viewBox="0 0 11 11"><path d="M1 0v11M10 0v11" stroke="#bbb"/><path d="M5.500 2v7" stroke="#79bff0" stroke-width="2"/></svg></button>
    <button aria-label="Distribute vertically"><svg viewBox="0 0 11 11"><path d="M0 1h11M0 10h11" stroke="#bbb"/><path d="M2 5.500h7" stroke="#79bff0" stroke-width="2"/></svg></button>
    <i class="sep"></i>
    <button aria-label="Align left"><svg viewBox="0 0 11 11"><path d="M1 0v11" stroke="#bbb"/><path d="M3 3h8M3 8h5" stroke="#79bff0" stroke-width="2"/></svg></button>
    <button aria-label="Align center"><svg viewBox="0 0 11 11"><path d="M5.500 0v11" stroke="#bbb"/><path d="M1 3h9M2.500 8h6" stroke="#79bff0" stroke-width="2"/></svg></button>
    <button aria-label="Align right"><svg viewBox="0 0 11 11"><path d="M10 0v11" stroke="#bbb"/><path d="M0 3h8M3 8h5" stroke="#79bff0" stroke-width="2"/></svg></button>
    <button aria-label="Align top"><svg viewBox="0 0 11 11"><path d="M0 1h11" stroke="#bbb"/><path d="M3 3v8M8 3v5" stroke="#79bff0" stroke-width="2"/></svg></button>
    <button aria-label="Align middle"><svg viewBox="0 0 11 11"><path d="M0 5.500h11" stroke="#bbb"/><path d="M3 1v9M8 2.500v6" stroke="#79bff0" stroke-width="2"/></svg></button>
    <button aria-label="Align bottom"><svg viewBox="0 0 11 11"><path d="M0 10h11" stroke="#bbb"/><path d="M3 0v8M8 4v4" stroke="#79bff0" stroke-width="2"/></svg></button>
  </div>
  <div class="props">
    <span>Position</span><input id="px"><i></i><input id="py">
    <label class="under first" for="px">X</label><label class="under second" for="py">Y</label>
    <span>Size</span><input id="sw"><button class="lock" aria-label="Lock proportions"><svg viewBox="0 0 6 8"><path d="M.5 3.500h5V8h-5z" fill="#999"/><path d="M1.500 3.500V2a1.500 1.500 0 0 1 3 0" fill="none" stroke="#999"/></svg></button><input id="sh">
    <label class="under first" for="sw">Width</label><label class="under second" for="sh">Height</label>
    <span>Transform</span><input id="ro"><i></i><div class="flip"><button aria-label="Flip horizontal"><svg viewBox="0 0 10 8"><path d="M4.500 0v8H0z" fill="#ccc"/><path d="M5.500 0v8H9z" fill="#aaa"/></svg></button><button aria-label="Flip vertical"><svg viewBox="0 0 10 8"><path d="M1 0v3.700h7z" fill="#aaa"/><path d="M1 4.500h7L1 8z" fill="#ccc"/></svg></button></div>
    <label class="under first" for="ro">Rotate</label><span class="under second">Flip</span>
  </div>
  <div class="looks">
    <label for="op">Opacity</label><input id="op" type="range" value="0"><input aria-label="Opacity value">
    <label for="bl">Blending</label><div class="select"><select id="bl"><option>Normal</option></select><svg viewBox="0 0 7 9"><path d="M1 3.500L3.500 1 6 3.500M1 5.500L3.500 8 6 5.500" fill="none" stroke="#777"/></svg></div>
  </div>
  <h2>Fills</h2><h2>Borders</h2><h2>Shadows</h2><h2>Inner Shadows</h2>
  <h2><label for="gb">Gaussian Blur <svg viewBox="0 0 7 9"><path d="M1 3.500L3.500 1 6 3.500M1 5.500L3.500 8 6 5.500" fill="none" stroke="#888"/></svg></label><input id="gb" type="checkbox"></h2>
</aside>
</div>
</body>
</html>
```
FILE: styles.css
```css
* { box-sizing: border-box; }
body { margin: 0; font: 8px/10px Inter, "Liberation Sans", sans-serif; color: #2c2c2c; }
button, input, select { font: inherit; color: inherit; margin: 0; padding: 0; border: 0; background: none; min-width: 0; }
button { display: flex; align-items: center; }
ul, h2, figure { margin: 0; padding: 0; list-style: none; }
svg { flex: none; display: block; }
.defs { position: absolute; width: 0; height: 0; visibility: hidden; }

.app { display: grid; grid-template: auto 1fr / 116px 1fr 147px; min-height: 100vh; }

.toolbar { grid-column: 1 / -1; display: flex; justify-content: space-between; padding: 6px 1px 3px 5px; background: linear-gradient(#e2dfe2, #cfcdcf); border-bottom: 1px solid #b2b0b2; }
.group { display: flex; gap: 6px; }
.zoomer { padding: 0 3px; }
.tool { flex-direction: column; gap: 2px; font-size: 7px; line-height: 9px; font-weight: 500; white-space: nowrap; }
.zoomer .tool { font-weight: 600; }
.tool svg { width: 16px; height: 16px; }
.tool svg.wide { width: 20px; }
.tool svg.zoom { width: 38px; }
.tool svg.round { width: 18px; }
.dim .tool { color: #8b898b; }
.dim svg { opacity: .8; }

.layers { display: flex; flex-direction: column; background: #efefef; border-right: 1px solid #c6c6c6; font-weight: 500; }
.page-bar { display: flex; justify-content: space-between; align-items: center; height: 18px; padding: 0 4px 0 6px; background: #f5f5f5; border-bottom: 1px solid #cfcfcf; }
.page { gap: 3px; }
.page svg { width: 6px; height: 4px; }
.panel-toggle svg { width: 9px; height: 9px; }
.boards li { height: 19px; background: #fbfbfb; border-bottom: 1px solid #d2d2d2; }
.boards li:first-child { height: 17px; }
.layers li button { width: 100%; height: 100%; text-align: left; white-space: nowrap; }
.boards button { padding-left: 6px; gap: 5px; }
.tree { flex: 1; }
.tree li { height: 19px; padding-left: 18px; }
.tree li:nth-child(odd) { background: #e8e8e8; }
.tree .l2 { padding-left: 29px; }
.tree .l3 { padding-left: 41px; }
.tree button { gap: 5px; }
.tree svg { width: 11px; height: 9px; }
.aa { width: 11px; color: #aaa; }
.layers li i { width: 7px; height: 7px; }
.tri { background: #999; clip-path: polygon(15% 0, 85% 50%, 15% 100%); }
.tri.open { clip-path: polygon(0 15%, 100% 15%, 50% 85%); }
.filter { display: flex; align-items: center; gap: 4px; height: 22px; padding: 0 4px 0 2px; background: #f5f5f5; border-top: 1px solid #d2d2d2; color: #3b8df0; font-size: 7px; }
.filter svg { width: 9px; height: 9px; }
.filter button { gap: 2px; }
.search { display: flex; flex: 1; align-items: center; gap: 3px; height: 13px; margin-right: 4px; padding-left: 12px; background: #fff; border: 1px solid #ccc; border-radius: 2px; }
.search input { width: 100%; outline: 0; font-size: 8px; font-weight: 400; }
.search input::placeholder { color: #aaa; }

.canvas { position: relative; background: #f1f1f1; overflow: hidden; }
.board { position: absolute; width: 64px; }
.board figcaption { height: 14px; padding-left: 2px; font-size: 10px; line-height: 12px; color: #8a8a8a; }
.board > svg { width: 100%; background: #fff; box-shadow: 0 1px 3px rgba(0, 0, 0, .4); overflow: hidden; }
.r0 { top: 17px; }
.r1 { top: 19px; }
.r2 { top: 192px; }
.c1 { left: 2px; } .c2 { left: 82px; } .c3 { left: 163px; } .c4 { left: 243px; }
.c5 { left: 323px; } .c6 { left: 404px; } .c7 { left: 484px; } .c8 { left: 564px; }
.d2 { left: 76px; } .d3 { left: 156px; } .d4 { left: 237px; } .d5 { left: 316px; }
.d6 { left: 398px; } .d7 { left: 479px; } .d8 { left: 559px; }

svg text { font-size: 2px; fill: #333; }
svg text.m { font-size: 3px; }
svg g.m text { font-size: 4px; }
svg .b { font-weight: 700; fill: #111; }
svg text.gray { fill: #777; }
svg text.pale { fill: #aaa; }
.line { fill: none; stroke: #bbb; stroke-width: .4px; }
.back { fill: none; stroke: #222; stroke-width: .6px; }
.hair { fill: #d8d8d8; stroke: #adadad; stroke-width: .7px; vector-effect: non-scaling-stroke; }
.dark { fill: none; stroke: #777; stroke-width: .6px; }
.keys path { fill: none; stroke: #fff; stroke-width: 5px; }

.inspector { background: #e7e7e7; border-left: 1px solid #b8b8b8; font-weight: 500; }
.align { display: flex; align-items: center; justify-content: space-between; height: 18px; padding: 0 1px 0 4px; background: #f6f6f6; border-bottom: 1px solid #cfcfcf; }
.align svg { width: 11px; height: 11px; }
.sep { width: 1px; height: 18px; background: #ddd; }
.props { display: grid; grid-template-columns: 45px 1fr 12px 1fr; align-items: center; justify-items: stretch; padding: 6px 3px 1px 4px; border-bottom: 1px solid #cfcfcf; }
.inspector input:not([type]) { width: 100%; height: 13px; padding: 0 3px; background: #fff; border: 1px solid #d6d6d6; }
.under { height: 12px; font-size: 7px; line-height: 11px; text-align: center; }
.first { grid-column: 2; }
.second { grid-column: 4; }
.lock { justify-content: center; }
.lock svg { width: 6px; height: 8px; }
.flip { display: flex; height: 12px; background: #efefef; border: 1px solid #d2d2d2; border-radius: 2px; }
.flip button { flex: 1; justify-content: center; }
.flip button + button { border-left: 1px solid #d8d8d8; }
.flip svg { width: 10px; height: 8px; }
.looks { display: grid; grid-template-columns: 45px 1fr 29px; row-gap: 6px; align-items: center; padding: 6px 3px 6px 4px; border-bottom: 1px solid #cfcfcf; }
.looks input[type=range] { appearance: none; width: auto; height: 9px; margin-right: 8px; background: linear-gradient(#c4c4c4, #c4c4c4) center / 100% 2px no-repeat; }
.looks input[type=range]::-webkit-slider-thumb { appearance: none; width: 9px; height: 9px; border-radius: 50%; background: #fff; border: 1px solid #d0d0d0; }
.select { grid-column: 2 / 4; display: flex; align-items: center; height: 14px; padding-right: 2px; background: #efefef; border: 1px solid #cfcfcf; border-radius: 2px; color: #777; }
.select select { appearance: none; flex: 1; padding-left: 5px; font-weight: 400; }
.select svg, h2 svg { width: 7px; height: 9px; }
h2 { display: flex; align-items: center; justify-content: space-between; height: 18px; padding: 0 1px 0 4px; border-bottom: 1px solid #cfcfcf; font-size: 8px; font-weight: 600; color: #555; }
h2 label { display: flex; align-items: center; gap: 4px; }
h2 input { appearance: none; width: 9px; height: 9px; background: #f5f5f5; border: 1px solid #ccc; border-radius: 2px; }
```
